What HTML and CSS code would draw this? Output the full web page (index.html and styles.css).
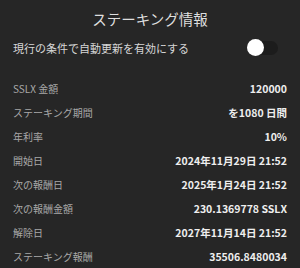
FILE: index.html
```html
<!DOCTYPE html>
<html lang="ja">

<head>
    <meta charset="UTF-8">
    <meta name="viewport" content="width=device-width, initial-scale=1.0">
    <title>ステーキング情報</title>
    <link rel="stylesheet" href="styles.css">
</head>

<body>
    <div class="staking-panel">
        <h1 class="panel-title">ステーキング情報</h1>

        <div class="auto-renew">
            <span>現行の条件で自動更新を有効にする</span>
            <span class="toggle" role="switch" aria-checked="false"><span class="knob"></span></span>
        </div>

        <dl class="info-list">
            <div class="info-row">
                <dt>SSLX 金額</dt>
                <dd>120000</dd>
            </div>
            <div class="info-row">
                <dt>ステーキング期間</dt>
                <dd>を1080 日間</dd>
            </div>
            <div class="info-row">
                <dt>年利率</dt>
                <dd>10%</dd>
            </div>
            <div class="info-row">
                <dt>開始日</dt>
                <dd>2024年11月29日 21:52</dd>
            </div>
            <div class="info-row">
                <dt>次の報酬日</dt>
                <dd>2025年1月24日 21:52</dd>
            </div>
            <div class="info-row">
                <dt>次の報酬金額</dt>
                <dd>230.1369778 SSLX</dd>
            </div>
            <div class="info-row">
                <dt>解除日</dt>
                <dd>2027年11月14日 21:52</dd>
            </div>
            <div class="info-row">
                <dt>ステーキング報酬</dt>
                <dd>35506.8480034</dd>
            </div>
        </dl>
    </div>
</body>

</html>
```

FILE: styles.css
```css
body, html {
    margin: 0;
    padding: 0;
    background: #262626;
    font-family: 'Noto Sans CJK JP', 'Noto Sans', sans-serif;
    overflow: hidden;
}

.staking-panel {
    width: 300px;
    height: 268px;
    padding: 0 13px;
    box-sizing: border-box;
}

.panel-title {
    margin: 0;
    padding-top: 7px;
    height: 33px;
    box-sizing: border-box;
    text-align: center;
    font-size: 14.5px;
    font-weight: 400;
    line-height: 24px;
    color: #dedede;
}

.auto-renew {
    display: flex;
    align-items: center;
    justify-content: space-between;
    height: 30px;
    font-size: 11px;
    color: #d6d6d6;
}

.toggle {
    position: relative;
    width: 30px;
    height: 14px;
    margin-right: 9px;
    border-radius: 7px;
    background: #1c1c1c;
}

.toggle .knob {
    position: absolute;
    left: -1px;
    top: -2px;
    width: 17px;
    height: 17px;
    border-radius: 50%;
    background: #fff;
}

.info-list {
    margin: 13px 0 0;
    padding: 0;
}

.info-row {
    display: flex;
    align-items: center;
    justify-content: space-between;
    height: 24px;
}

.info-row dt {
    font-size: 10px;
    color: #a8a8a8;
}

.info-row dd {
    margin: 0;
    font-size: 10.5px;
    font-weight: 700;
    color: #eeeeee;
}
```
